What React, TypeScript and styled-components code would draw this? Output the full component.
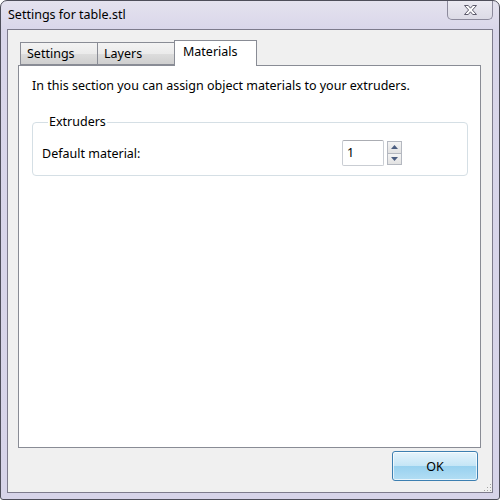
import React from 'react';
import styled, { createGlobalStyle } from 'styled-components';

const GlobalStyle = createGlobalStyle`
  html, body {
    margin: 0;
    padding: 0;
    background: #ffffff;
  }
  * {
    box-sizing: border-box;
  }
`;

const uiFont = `"Noto Sans", "Liberation Sans", sans-serif`;

const Window = styled.div`
  width: 500px;
  height: 500px;
  display: flex;
  flex-direction: column;
  padding: 0 6px 6px 6px;
  border: 1px solid #4e4e5a;
  border-radius: 7px 7px 3px 3px;
  background: linear-gradient(180deg, #e4e2ee 0%, #d9d6ea 30px, #d7d4e9 100%);
  font-family: ${uiFont};
  font-size: 12px;
  color: #000;
`;

const TitleBar = styled.div`
  height: 28px;
  display: flex;
  align-items: flex-start;
  position: relative;
  margin: 0 -6px 0 -6px;
`;

const Title = styled.span`
  padding: 5px 0 0 7px;
  font-size: 12.5px;
  color: #000;
`;

const CloseButton = styled.button`
  margin-left: auto;
  margin-right: 6px;
  width: 46px;
  height: 19px;
  padding: 0;
  border: 1px solid #8c8a9c;
  border-top: none;
  border-radius: 0 0 5px 5px;
  background: linear-gradient(180deg, #ebeaf2 0%, #dcdbe6 100%);
  display: flex;
  align-items: center;
  justify-content: center;
`;

const Client = styled.div`
  flex: 1;
  display: flex;
  flex-direction: column;
  border: 1px solid #7d7b8c;
  background: #f0f0f0;
  padding: 10px 11px 0 10px;
  position: relative;
`;

const TabStrip = styled.div`
  display: flex;
  align-items: flex-end;
  height: 25px;
  padding-left: 2px;
  position: relative;
  z-index: 1;
`;

const Tab = styled.div<{ $active?: boolean; $first?: boolean; $w: number }>`
  height: ${(p) => (p.$active ? '26px' : '23px')};
  width: ${(p) => p.$w}px;
  margin-bottom: ${(p) => (p.$active ? '-1px' : '0')};
  margin-left: ${(p) => (p.$active ? '-1px' : '0')};
  padding: ${(p) => (p.$active ? '2px 0 0 8px' : '2px 0 0 6px')};
  border: 1px solid #898c95;
  border-bottom: ${(p) => (p.$active ? 'none' : '1px solid #898c95')};
  border-left: ${(p) => (p.$first || p.$active ? '1px solid #898c95' : 'none')};
  background: ${(p) =>
    p.$active ? '#ffffff' : 'linear-gradient(180deg, #f3f3f3 0%, #ebebeb 50%, #dddddd 51%, #cfcfcf 100%)'};
  white-space: nowrap;
  font-size: 12.5px;
`;

const Panel = styled.div`
  height: 383px;
  background: #ffffff;
  border: 1px solid #898c95;
  padding: 11px 12px 0 13px;
`;

const Intro = styled.p`
  margin: 0;
  line-height: 18px;
  font-size: 12.5px;
`;

const GroupBox = styled.fieldset`
  margin: 20px 0 0 0;
  padding: 9px 10px 7px 9px;
  border: 1px solid #d5dfe5;
  border-radius: 4px;
  height: 61px;
`;

const Legend = styled.legend`
  padding: 0 1px;
  margin-left: 6px;
  font-size: 12.5px;
  line-height: 14px;
`;

const FieldRow = styled.div`
  display: flex;
  align-items: center;
  margin-top: 2px;
`;

const FieldLabel = styled.span`
  font-size: 12.5px;
  flex: 1;
`;

const Spinner = styled.div`
  display: flex;
  align-items: center;
  gap: 3px;
  margin-right: 55px;
`;

const SpinInput = styled.div`
  width: 42px;
  height: 26px;
  border: 1px solid #c9cdd3;
  border-top-color: #abadb3;
  border-radius: 2px;
  padding: 3px 0 0 4px;
  font-size: 12.5px;
  background: #fff;
`;

const SpinButtons = styled.div`
  display: flex;
  flex-direction: column;
  width: 15px;
  height: 24px;
  border: 1px solid #b4b8c0;
`;

const SpinButton = styled.div<{ $down?: boolean }>`
  flex: 1;
  display: flex;
  align-items: center;
  justify-content: center;
  background: linear-gradient(180deg, #f4f4f4 0%, #e2e2e2 100%);
  border-top: ${(p) => (p.$down ? '1px solid #b4b8c0' : 'none')};
`;

const Footer = styled.div`
  flex: 1;
  display: flex;
  justify-content: flex-end;
  align-items: flex-start;
  padding: 3px 3px 0 0;
`;

const OkButton = styled.button`
  width: 86px;
  height: 30px;
  border: 1px solid #3c7fb1;
  border-radius: 3px;
  background: linear-gradient(180deg, #e5f4fc 0%, #c4e5f6 50%, #98d1ef 51%, #b3def4 100%);
  box-shadow: inset 0 0 0 1px rgba(255, 255, 255, 0.7);
  font-family: ${uiFont};
  font-size: 12.5px;
  color: #000;
  padding: 0;
`;

const Grip = styled.div`
  position: absolute;
  right: 1px;
  bottom: 1px;
  width: 8px;
  height: 8px;
  background-image: radial-gradient(circle, #a3a3a3 0.8px, transparent 1px);
  background-size: 3px 3px;
  clip-path: polygon(100% 0, 100% 100%, 0 100%);
`;

const Arrow = ({ down }: { down?: boolean }) => (
  <svg width="7" height="4" viewBox="0 0 7 4">
    <path d={down ? 'M0 0h7L3.5 4z' : 'M3.5 0L7 4H0z'} fill="#4b5d80" />
  </svg>
);

const CloseGlyph = () => (
  <svg width="15" height="12" viewBox="0 0 15 12">
    <path
      d="M1.5 1.5h3.8l2.2 2.7 2.2-2.7h3.8l-4.1 4.5 4.1 4.5h-3.8l-2.2-2.7-2.2 2.7h-3.8l4.1-4.5z"
      fill="#ffffff"
      stroke="#5d5b6c"
      strokeWidth="1"
      strokeLinejoin="round"
    />
  </svg>
);

const App = () => {
  return (
    <>
      <GlobalStyle />
      <Window>
        <TitleBar>
          <Title>Settings for table.stl</Title>
          <CloseButton aria-label="Close">
            <CloseGlyph />
          </CloseButton>
        </TitleBar>
        <Client>
          <TabStrip>
            <Tab $first $w={78}>Settings</Tab>
            <Tab $w={77}>Layers</Tab>
            <Tab $active $w={83}>Materials</Tab>
          </TabStrip>
          <Panel>
            <Intro>In this section you can assign object materials to your extruders.</Intro>
            <GroupBox>
              <Legend>Extruders</Legend>
              <FieldRow>
                <FieldLabel>Default material:</FieldLabel>
                <Spinner>
                  <SpinInput>1</SpinInput>
                  <SpinButtons>
                    <SpinButton>
                      <Arrow />
                    </SpinButton>
                    <SpinButton $down>
                      <Arrow down />
                    </SpinButton>
                  </SpinButtons>
                </Spinner>
              </FieldRow>
            </GroupBox>
          </Panel>
          <Footer>
            <OkButton>OK</OkButton>
          </Footer>
          <Grip />
        </Client>
      </Window>
    </>
  );
};

export default App;
